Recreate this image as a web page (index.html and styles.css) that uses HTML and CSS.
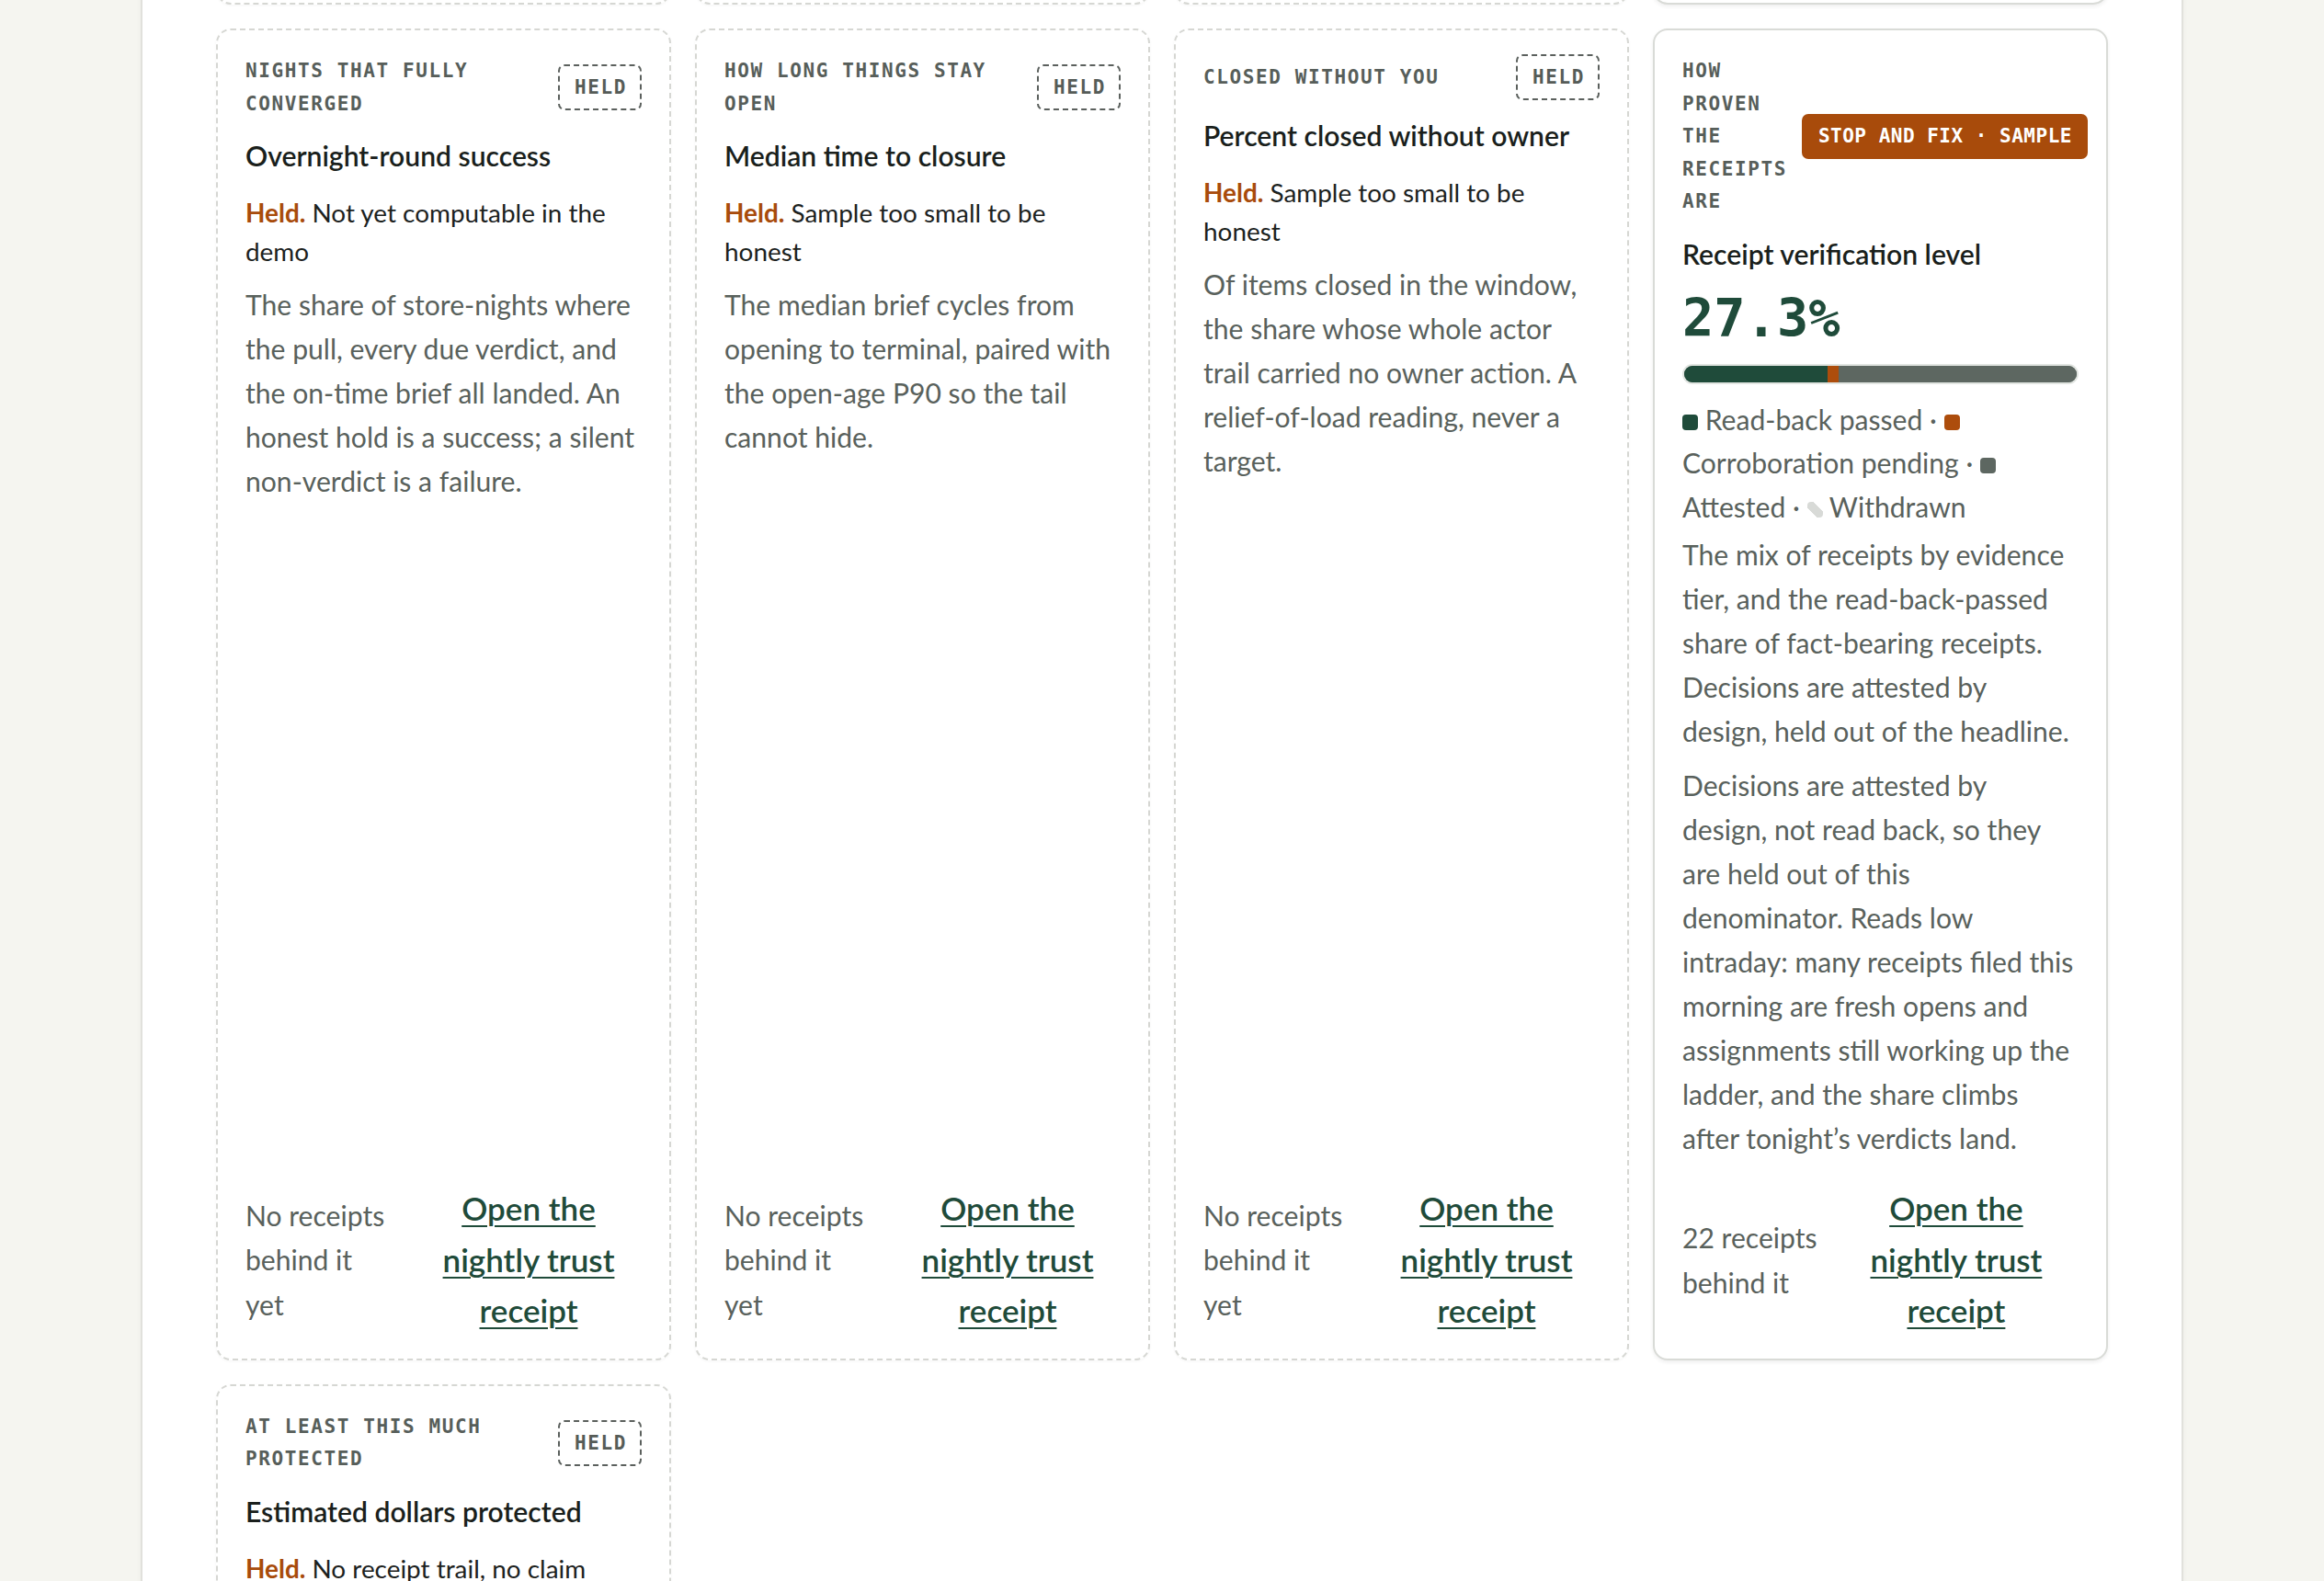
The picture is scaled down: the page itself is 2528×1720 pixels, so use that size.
FILE: index.html
```html
<!DOCTYPE html>
<html lang="en">
<head>
<meta charset="utf-8">
<title>Trust metrics</title>
<link rel="stylesheet" href="styles.css">
</head>
<body>
<main class="panel">
  <section class="grid">
    <div class="card stub"></div>
    <div class="card stub"></div>
    <div class="card stub"></div>
    <div class="card live stub"></div>

    <article class="card">
      <header class="head">
        <div class="eyebrow">Nights that fully converged</div>
        <span class="badge">Held</span>
      </header>
      <h3 class="title">Overnight-round success</h3>
      <p class="held"><b>Held.</b> Not yet computable in the demo</p>
      <p class="desc">The share of store-nights where the pull, every due verdict, and the on-time brief all landed. An honest hold is a success; a silent non-verdict is a failure.</p>
      <footer class="foot">
        <span class="foot-note">No receipts behind it yet</span>
        <a class="foot-link" href="#">Open the nightly trust receipt</a>
      </footer>
    </article>

    <article class="card">
      <header class="head">
        <div class="eyebrow">How long things stay open</div>
        <span class="badge">Held</span>
      </header>
      <h3 class="title">Median time to closure</h3>
      <p class="held"><b>Held.</b> Sample too small to be honest</p>
      <p class="desc">The median brief cycles from opening to terminal, paired with the open-age P90 so the tail cannot hide.</p>
      <footer class="foot">
        <span class="foot-note">No receipts behind it yet</span>
        <a class="foot-link" href="#">Open the nightly trust receipt</a>
      </footer>
    </article>

    <article class="card">
      <header class="head">
        <div class="eyebrow">Closed without you</div>
        <span class="badge">Held</span>
      </header>
      <h3 class="title">Percent closed without owner</h3>
      <p class="held"><b>Held.</b> Sample too small to be honest</p>
      <p class="desc">Of items closed in the window, the share whose whole actor trail carried no owner action. A relief-of-load reading, never a target.</p>
      <footer class="foot">
        <span class="foot-note">No receipts behind it yet</span>
        <a class="foot-link" href="#">Open the nightly trust receipt</a>
      </footer>
    </article>

    <article class="card live">
      <header class="head">
        <div class="eyebrow">How proven the receipts are</div>
        <span class="badge stop">Stop and fix · Sample</span>
      </header>
      <h3 class="title">Receipt verification level</h3>
      <div class="num">27.3%</div>
      <div class="bar">
        <span class="seg seg-pass" style="width:36.5%"></span>
        <span class="seg seg-pend" style="width:2.8%"></span>
        <span class="seg seg-att"></span>
      </div>
      <p class="legend"><span class="sw sw-pass"></span> Read-back passed · <span class="sw sw-pend"></span> Corroboration pending · <span class="sw sw-att"></span> Attested · <span class="sw sw-wd"></span> Withdrawn</p>
      <p class="desc first">The mix of receipts by evidence tier, and the read-back-passed share of fact-bearing receipts. Decisions are attested by design, held out of the headline.</p>
      <p class="desc next">Decisions are attested by design, not read back, so they are held out of this denominator. Reads low intraday: many receipts filed this morning are fresh opens and assignments still working up the ladder, and the share climbs after tonight’s verdicts land.</p>
      <footer class="foot">
        <span class="foot-note">22 receipts behind it</span>
        <a class="foot-link" href="#">Open the nightly trust receipt</a>
      </footer>
    </article>

    <article class="card">
      <header class="head">
        <div class="eyebrow">At least this much protected</div>
        <span class="badge">Held</span>
      </header>
      <h3 class="title">Estimated dollars protected</h3>
      <p class="held"><b>Held.</b> No receipt trail, no claim</p>
      <p class="desc">A floor, not an estimate: only dollars tied to a closed receipt with a verified outcome count toward it.</p>
      <footer class="foot">
        <span class="foot-note">No receipts behind it yet</span>
        <a class="foot-link" href="#">Open the nightly trust receipt</a>
      </footer>
    </article>
  </section>
</main>
</body>
</html>
```

FILE: styles.css
```css
* { box-sizing: border-box; }

html, body {
  margin: 0;
  padding: 0;
}

body {
  background: #f5f5f0;
  font-family: Lato, "Noto Sans", sans-serif;
  color: #1c211e;
}

.panel {
  width: 2222px;
  margin: -40px auto 0;
  padding: 0 80px 60px;
  background: #ffffff;
  border-left: 2px solid #e1e1dc;
  border-right: 2px solid #e1e1dc;
  box-shadow: 0 0 6px rgba(0, 0, 0, 0.04);
  min-height: 1900px;
}

.grid {
  display: grid;
  grid-template-columns: repeat(4, 1fr);
  gap: 26px;
  align-items: stretch;
}

.card {
  background: #ffffff;
  border: 2px dashed #d6d7d3;
  border-radius: 16px;
  padding: 26px 30px 24px;
  display: flex;
  flex-direction: column;
  min-width: 0;
  box-shadow: 0 1px 3px rgba(0, 0, 0, 0.04);
}

.card.live {
  border-style: solid;
  border-color: #d9dbd7;
  box-shadow: 0 2px 4px rgba(0, 0, 0, 0.07);
}

.card.stub {
  height: 45px;
  padding: 0;
}

.head {
  display: flex;
  align-items: center;
  justify-content: space-between;
  gap: 16px;
}

.eyebrow {
  font-family: "DejaVu Sans Mono", "Liberation Mono", monospace;
  font-weight: 700;
  font-size: 21px;
  line-height: 35.5px;
  letter-spacing: 1.6px;
  text-transform: uppercase;
  color: #575e5a;
  margin-top: 1px;
}

.badge {
  flex-shrink: 0;
  white-space: nowrap;
  font-family: "DejaVu Sans Mono", "Liberation Mono", monospace;
  font-weight: 700;
  font-size: 21px;
  line-height: 30px;
  letter-spacing: 1.6px;
  text-transform: uppercase;
  color: #565c58;
  padding: 8px 14px 8px 16px;
  border: 2px dashed #5b605d;
  border-radius: 7px;
}

.badge.stop {
  background: #a84b0b;
  color: #ffffff;
  border: none;
  padding: 9px 17px 9px 18px;
  line-height: 31px;
  letter-spacing: 0.5px;
}

.title {
  margin: 20px 0 0;
  font-size: 30.1px;
  line-height: 37.4px;
  font-weight: 600;
  color: #1a1f1c;
}

.held {
  margin: 22px 0 0;
  font-size: 27.9px;
  line-height: 42px;
  color: #1c221e;
}

.held b {
  color: #a84b0b;
  font-weight: 700;
}

.desc {
  margin: 13px 0 0;
  font-size: 30.1px;
  line-height: 48px;
  color: #59615c;
}

.live .desc {
  margin-right: 4px;
}

.desc.first {
  margin-top: 4px;
}

.desc.next {
  margin-top: 11px;
}

.num {
  margin-top: 20px;
  font-family: "DejaVu Sans Mono", "Liberation Mono", monospace;
  font-weight: 700;
  font-size: 57px;
  line-height: 63px;
  color: #1f4b3a;
}

.bar {
  margin-top: 18px;
  height: 22px;
  display: flex;
  border: 2px solid #e1e5e1;
  border-radius: 11px;
  overflow: hidden;
  background: #5d6761;
}

.seg { display: block; height: 100%; }
.seg-pass { background: #1f4b3a; }
.seg-pend { background: #ad4d0c; }
.seg-att { flex: 1; background: #5d6761; }

.legend {
  margin: 15px 0 0;
  font-size: 30.1px;
  line-height: 47.5px;
  color: #59615c;
}

.sw {
  display: inline-block;
  width: 17px;
  height: 17px;
  border-radius: 4px;
  vertical-align: middle;
  position: relative;
  top: -1px;
}

.sw-pass { background: #1f4b3a; }
.sw-pend { background: #ad4d0c; }
.sw-att { background: #5d6761; }
.sw-wd {
  background: linear-gradient(45deg, transparent 32%, #d8dad7 32%, #d8dad7 68%, transparent 68%);
}

.foot {
  margin-top: auto;
  padding-top: 25px;
  display: flex;
  align-items: center;
  justify-content: space-between;
  gap: 16px;
}

.foot-note {
  width: 158px;
  font-size: 30.1px;
  line-height: 48.4px;
  color: #59615c;
}

.foot-link {
  width: 246px;
  text-align: center;
  font-size: 35px;
  line-height: 55.5px;
  font-weight: 600;
  color: #1f4b3a;
  text-decoration: underline;
  text-decoration-thickness: 2px;
  text-underline-offset: 5px;
}

.live .foot-link {
  width: 252px;
  margin-right: 8px;
}
```
